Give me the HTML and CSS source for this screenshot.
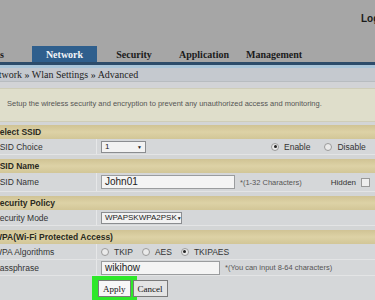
FILE: index.html
```html
<!DOCTYPE html>
<html lang="en">
<head>
  <meta charset="UTF-8">
  <title>Wlan Settings - Advanced</title>
  <link rel="stylesheet" href="styles.css">
</head>
<body>

<!-- Header -->
<div class="top-bar">
  <span class="logout">Log</span>
</div>

<!-- Tabs -->
<div class="tabs">
  <span class="tab tab-status">Options</span>
  <span class="tab active">Network</span>
  <span class="tab tab-security">Security</span>
  <span class="tab tab-app">Application</span>
  <span class="tab tab-manage">Management</span>
</div>
<div class="tab-line"></div>
<div class="tab-strip"></div>

<div class="crumbs">Network &raquo; Wlan Settings &raquo; Advanced</div>
<div class="crumb-gap"></div>

<div class="notice">Setup the wireless security and encryption to prevent any unauthorized access and monitoring.</div>

<div class="form">
  <div class="section-title">Select SSID</div>
  <div class="row">
    <div class="label">SSID Choice</div>
    <div class="value">
      <span class="select select-ssid">1<span class="arrow">&#9660;</span></span>
      <span class="radios">
        <span class="radio on"></span><span class="opt">Enable</span>
        <span class="radio"></span><span class="opt">Disable</span>
        <span class="star">*</span>
      </span>
    </div>
  </div>

  <div class="section-title">SSID Name</div>
  <div class="row row-tall">
    <div class="label">SSID Name</div>
    <div class="value">
      <span class="input input-name">John01</span>
      <span class="hint">*(1-32 Characters)</span>
      <span class="hidden-opt">Hidden <span class="check"></span></span>
    </div>
  </div>

  <div class="section-title">Security Policy</div>
  <div class="row">
    <div class="label">Security Mode</div>
    <div class="value">
      <span class="select select-mode">WPAPSKWPA2PSK<span class="arrow">&#9660;</span></span>
    </div>
  </div>

  <div class="section-title">WPA(Wi-Fi Protected Access)</div>
  <div class="row">
    <div class="label">WPA Algorithms</div>
    <div class="value">
      <span class="radio"></span><span class="opt opt-sm">TKIP</span>
      <span class="radio"></span><span class="opt opt-sm">AES</span>
      <span class="radio on"></span><span class="opt opt-sm">TKIPAES</span>
    </div>
  </div>
  <div class="row">
    <div class="label">Passphrase</div>
    <div class="value">
      <span class="input input-pass">wikihow</span>
      <span class="hint">*(You can input 8-64 characters)</span>
    </div>
  </div>

  <div class="buttons">
    <span class="highlight"><button class="btn">Apply</button></span>
    <button class="btn btn-cancel">Cancel</button>
  </div>
</div>

</body>
</html>
```

FILE: styles.css
```css
body {
  margin: 0;
  width: 375px;
  height: 300px;
  overflow: hidden;
  background-color: #d3d5d6;
  font-family: 'Liberation Sans', Arial, sans-serif;
}

.top-bar {
  height: 46px;
  background-color: #a6a6a6;
  position: relative;
}

.logout {
  position: absolute;
  left: 361px;
  top: 13px;
  font-size: 10px;
  font-weight: bold;
  color: #1a1a1a;
}

.tabs {
  height: 16px;
  background-color: #a6a6a6;
  display: flex;
  align-items: flex-end;
  margin-left: -58px;
  font-family: 'Liberation Serif', 'Times New Roman', serif;
  font-weight: bold;
  font-size: 10px;
  color: #1b1b1b;
}

.tab {
  height: 16px;
  line-height: 17px;
  text-align: center;
  white-space: nowrap;
}

.tab-status { width: 90px; }

.tab.active {
  width: 65px;
  background-color: #2f5f8d;
  color: #f2f4f8;
}

.tab-security { width: 74px; }
.tab-app { width: 66px; }
.tab-manage { width: 74px; }

.tab-line {
  height: 3px;
  background-color: #2c4c6b;
}

.tab-strip {
  height: 3px;
  background-color: #a9c5d9;
}

.crumbs {
  height: 13px;
  line-height: 13px;
  background-color: #c5c9cf;
  margin-left: -13px;
  font-family: 'Liberation Serif', 'Times New Roman', serif;
  font-size: 10px;
  color: #1e1e1e;
  border-bottom: 1px solid #b8bcc0;
  white-space: nowrap;
}

.crumb-gap {
  height: 6px;
  background-color: #d2d3d6;
}

.notice {
  height: 32px;
  line-height: 30px;
  background-color: #dfdecb;
  padding-left: 7px;
  font-size: 7.5px;
  color: #555;
  border-top: 1px solid #cfcdb8;
  border-bottom: 1px solid #cfcdb8;
  white-space: nowrap;
}

.form {
  padding-top: 3px;
  margin-left: -6px;
}

.section-title {
  height: 14px;
  line-height: 14px;
  background: linear-gradient(#d0c394, #ddd2a6 50%, #d2c697);
  font-size: 8.5px;
  font-weight: bold;
  color: #2a2a1e;
  margin-top: 4px;
}

.section-title:first-child {
  margin-top: 0;
}

.row {
  display: grid;
  grid-template-columns: 103px 1fr;
  height: 15px;
  background-color: #d5d7d9;
  border-bottom: 1px solid #e3e4e5;
  font-size: 8.5px;
  color: #333;
}

.row-tall {
  height: 18px;
}

.label {
  display: flex;
  align-items: center;
  border-right: 1px solid #e6e7e8;
  white-space: nowrap;
}

.value {
  display: flex;
  align-items: center;
  padding-left: 4px;
  white-space: nowrap;
}

.select {
  display: inline-flex;
  justify-content: space-between;
  align-items: center;
  height: 10px;
  padding: 0 3px;
  background-color: #f2f2f2;
  border: 1px solid #8b8d90;
  font-size: 8px;
  color: #222;
}

.select-ssid { width: 37px; }
.select-mode { width: 73px; }

.arrow {
  font-size: 5px;
}

.radios {
  display: flex;
  align-items: center;
  margin-left: 125px;
}

.radio {
  width: 6px;
  height: 6px;
  border: 1px solid #9a9a9a;
  border-radius: 50%;
  background-color: #eaeaea;
  margin-right: 5px;
  position: relative;
  flex-shrink: 0;
}

.radio.on::after {
  content: "";
  position: absolute;
  left: 1.5px;
  top: 1.5px;
  width: 3px;
  height: 3px;
  border-radius: 50%;
  background-color: #222;
}

.opt {
  margin-right: 14px;
}

.opt-sm {
  margin-right: 9px;
}

.star {
  color: #9a4a4a;
}

.input {
  display: inline-block;
  height: 12px;
  line-height: 12px;
  padding-left: 3px;
  background-color: #f4f4f4;
  border: 1px solid #9a9c9e;
  font-size: 10px;
  color: #222;
}

.input-name { width: 129px; }
.input-pass { width: 114px; }

.hint {
  margin-left: 5px;
  font-size: 7.5px;
  color: #555;
}

.hidden-opt {
  margin-left: 29px;
  display: flex;
  align-items: center;
  font-size: 8px;
}

.check {
  display: inline-block;
  width: 7px;
  height: 7px;
  border: 1px solid #999;
  background-color: #eee;
  margin-left: 5px;
}

.buttons {
  display: flex;
  align-items: flex-start;
  height: 30px;
  padding-left: 98px;
  background-color: #d5d7d9;
}

.highlight {
  display: inline-flex;
  padding: 4px 6px;
  background-color: #2ee82a;
}

.btn {
  font-family: 'Liberation Serif', 'Times New Roman', serif;
  font-size: 9px;
  padding: 1px 4px;
  height: 17px;
  background-color: #f7f7f7;
  border: 1px solid #7a7a7a;
  color: #111;
}

.btn-cancel {
  margin-left: -4px;
  margin-top: 4px;
  background-color: #e4e4e4;
}
```
